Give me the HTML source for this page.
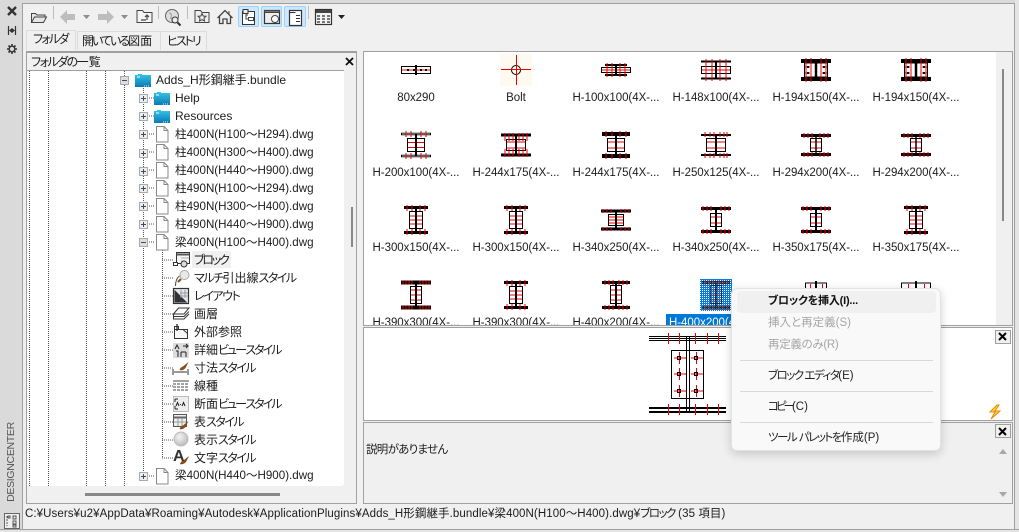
<!DOCTYPE html>
<html><head><meta charset="utf-8"><style>
html,body{margin:0;padding:0}
body{width:1019px;height:532px;overflow:hidden;background:#f0f0f0;position:relative;font-family:"Liberation Sans","Noto Sans CJK JP",sans-serif;font-size:12px;color:#1c1c1c;font-feature-settings:"palt"}
.a{position:absolute}
.t{position:absolute;white-space:nowrap;line-height:16px;height:16px}
.f{font-size:11.6px}
.k{letter-spacing:-1.5px}
.kk{letter-spacing:-2px}
.l{position:absolute;width:100px;text-align:center;line-height:16px;white-space:nowrap;font-size:11.5px;letter-spacing:-.04px}
svg{position:absolute;overflow:visible}
.m{position:absolute;left:36px;white-space:nowrap;line-height:16px;font-size:11.5px;color:#222}
.d{color:#a6a6a6}
.s{position:absolute;left:8px;width:193px;height:1px;background:#d9d9d9}
.x{position:absolute;width:16px;height:14px;background:#f0f0f0;border:1px solid #a0a0a0;box-sizing:border-box}
</style></head><body>
<!-- frame -->
<div class="a" style="left:0;top:0;width:1019px;height:3px;background:#dadada"></div>
<div class="a" style="left:0;top:0;width:22px;height:532px;background:#dadada"></div>
<div class="a" style="left:22px;top:3px;width:1px;height:527px;background:#a0a0a0"></div>
<div class="a" style="left:1014px;top:3px;width:1px;height:527px;background:#a0a0a0"></div>
<div class="a" style="left:1015px;top:0;width:4px;height:532px;background:#e4e4e4"></div>
<div class="a" style="left:0;top:529px;width:1019px;height:1px;background:#a0a0a0"></div>
<div class="a" style="left:0;top:530px;width:1019px;height:2px;background:#e4e4e4"></div>
<div class="a" style="left:22px;top:3px;width:993px;height:1px;background:#a0a0a0"></div>
<!-- left strip icons -->
<svg style="left:0;top:0" width="22" height="532">
<path d="M8 7l8 8M16 7l-8 8" stroke="#333" stroke-width="2.4" fill="none"/>
<path d="M8.500 26v9M15.500 26v9" stroke="#333" stroke-width="1.200"/><path d="M9 30.500l3-2.500v5zM15 30.500l-3-2.500v5z" fill="#333"/>
<path d="M12 44v10M7 49h10M8.500 45.500l7 7M15.500 45.500l-7 7" stroke="#333" stroke-width="1.600"/>
<circle cx="12" cy="49" r="2.800" fill="#dadada" stroke="#333" stroke-width="1.400"/>
<rect x="4.500" y="513.500" width="15" height="15" fill="#eee" stroke="#666"/>
<path d="M8 516h2v2h-2zM13 516h3v3h-3zM13 521h3v3h-3zM13 525h3v2h-3z" fill="none" stroke="#555"/>
<path d="M7 516v10" stroke="#555" stroke-dasharray="2 1"/>
</svg>
<div class="t" style="left:-29px;top:454px;width:80px;text-align:center;transform:rotate(-90deg);color:#555;font-size:10.500px;letter-spacing:-.3px">DESIGNCENTER</div>

<!-- toolbar selected -->
<div class="a" style="left:238px;top:6px;width:21px;height:21px;background:#cce8ff;border:1px solid #99d1ff;box-sizing:border-box;border-radius:2px"></div>
<div class="a" style="left:261px;top:6px;width:21px;height:21px;background:#cce8ff;border:1px solid #99d1ff;box-sizing:border-box;border-radius:2px"></div>
<div class="a" style="left:284px;top:6px;width:22px;height:21px;background:#cce8ff;border:1px solid #99d1ff;box-sizing:border-box;border-radius:2px"></div>
<svg style="left:0;top:0" width="360" height="30">
<g fill="none" stroke="#444" stroke-width="1">
<path d="M31.500 22.500v-9h4l1.500 1.500h8v2M31.500 22.500l3-5.500h12l-3 5.500z" fill="#e6e6e6"/>
<path d="M137 22.500h15v-10h-8l-1.500-2h-5.500z" fill="#f4f4f4"/>
<path d="M141 20h5M147 20v-4M145 17l2-2 2 2" stroke-width="1.200"/>
<path d="M195 22.500h14v-10h-7l-1.500-2h-5.500z" fill="#eee"/>
<path d="M202 13.500l1.200 2.500 2.800.3-2 1.900.5 2.800-2.500-1.300-2.500 1.300.5-2.800-2-1.900 2.800-.3z"/>
<path d="M217.500 18l7.500-7.500 7.500 7.500M219.500 16.500v7h3.500v-4.500h4v4.500h3.500v-7" stroke-width="1.300" fill="#eee"/>
<path d="M229 11v3" />
<circle cx="172" cy="16" r="6.500" fill="#ddd" stroke="#666"/>
<path d="M169 13c2 0 3 2 2 4s2 3 3 2" stroke="#999"/>
<circle cx="175" cy="20" r="3" fill="#eee" stroke="#333"/>
<path d="M177.500 22.500l3 3" stroke="#333" stroke-width="2"/>
<rect x="242.500" y="11.500" width="12" height="13" fill="#fff" stroke="#333"/>
<rect x="243" y="9.500" width="5" height="4" fill="#eee" stroke="#333"/>
<path d="M246 13v6h2M246 15h2"/><rect x="248.500" y="17.500" width="5" height="3"/>
<rect x="264.500" y="10.500" width="15" height="13" fill="#eee" stroke="#333" stroke-width="1.200"/>
<rect x="264.500" y="10.500" width="15" height="2" fill="#777"/>
<circle cx="275" cy="19" r="3.500" fill="#fff"/>
<rect x="289.500" y="10.500" width="12" height="15" fill="#fff" stroke="#333" stroke-width="1.200"/>
<path d="M289.500 12.500h6M296 15.500h4M296 18.500h4M296 21.500h4" stroke="#333"/>
<rect x="315.500" y="9.500" width="16" height="15" fill="#f4f4f4" stroke="#333" stroke-width="1.200"/>
</g>
<path d="M316 10h15v3h-15z" fill="#444"/>
<path d="M317 15h3v2h-3zM322 15h3v2h-3zM327 15h3v2h-3zM317 18h3v2h-3zM322 18h3v2h-3zM327 18h3v2h-3zM317 21h3v2h-3zM322 21h3v2h-3zM327 21h3v2h-3z" fill="#777"/>
<path d="M60 17l7-7v4h8v6h-8v4z" fill="#bdbdbd"/>
<path d="M114 17l-7-7v4h-9v6h9v4z" fill="#bdbdbd"/>
<path d="M83 15h7l-3.500 4zM121 15h7l-3.500 4z" fill="#8c8c8c"/>
<path d="M338 15h7l-3.500 4z" fill="#222"/>
<path d="M53.500 6v13M158.500 6v13M187.500 6v13M308.500 6v13" stroke="#bdbdbd"/>
</svg>
<!-- tabs -->
<div class="a" style="left:26px;top:30px;width:50px;height:20px;background:#f0f0f0;border:1px solid #dcdcdc;border-bottom:0;box-sizing:border-box"></div>
<div class="a" style="left:77px;top:31px;width:84px;height:19px;border:1px solid #dcdcdc;border-bottom:0;box-sizing:border-box"></div>
<div class="a" style="left:161px;top:31px;width:46px;height:19px;border:1px solid #dcdcdc;border-bottom:0;border-left:0;box-sizing:border-box"></div>
<div class="t" style="left:33px;top:31px;letter-spacing:-1.750px">フォルダ</div>
<div class="t" style="left:82px;top:33px"><span class="kk">開いている</span>図面</div>
<div class="t" style="left:167px;top:33px;letter-spacing:-2px">ヒストリ</div>

<!-- tree panel -->
<div class="a" style="left:26px;top:51px;width:331px;height:453px;border:1px solid #a0a0a0;border-top-width:2px;box-sizing:border-box"></div>
<div class="a" style="left:27px;top:70px;width:317px;height:1px;background:#a0a0a0"></div>
<div class="a" style="left:27px;top:71px;width:317px;height:415px;background:#fff;border-radius:0 0 3px 0"></div>
<div class="t" style="left:31px;top:54px"><span style="letter-spacing:-1.500px">フォルダの</span>一覧</div>
<svg style="left:0;top:0" width="360" height="532">
<path d="M346 58l7 7M353 58l-7 7" stroke="#111" stroke-width="1.800" fill="none"/>
<g stroke="#555" fill="none" stroke-dasharray="1 1">
<path d="M29.500 71v415M48.500 71v415M86.500 71v415M105.500 71v415M124.500 71v415"/>
<path d="M143.500 88v387M162.500 250v208"/>
<path d="M147 98h7M147 116h7M147 134h8M147 152h8M147 170h8M147 188h8M147 206h8M147 224h8M147 242h8M147 476h8"/>
<path d="M162 260h11M162 278h11M162 296h11M162 314h11M162 332h11M162 350h11M162 368h11M162 386h11M162 404h11M162 422h11M162 440h11M162 458h11"/>
</g>
<rect x="344" y="71" width="12" height="415" fill="#f0f0f0"/>
<rect x="351" y="207" width="2" height="40" fill="#888"/>
<rect x="85" y="493" width="195" height="3" fill="#888"/>
</svg>
<div class="a" style="left:192px;top:251px;width:39px;height:17px;background:#f0f0f0"></div>
<svg style="left:0;top:0" width="360" height="532">
<defs>
<linearGradient id="fg" x1="0" y1="0" x2="0" y2="1"><stop offset="0" stop-color="#35c6e8"/><stop offset="1" stop-color="#0b79b4"/></linearGradient>
<radialGradient id="sph" cx=".4" cy=".35" r=".7"><stop offset="0" stop-color="#f4f4f4"/><stop offset="1" stop-color="#b8b8b8"/></radialGradient>
<symbol id="fold" overflow="visible"><path d="M0 0h3v-1h4v1h9v12h-16z" fill="url(#fg)"/><path d="M2 2h3" stroke="#fff"/><path d="M9 11h6" stroke="#cfe" stroke-dasharray="1 1"/></symbol>
<symbol id="file" overflow="visible"><path d="M.5 .5h7.500l4 4v11.500h-11.500z" fill="#fff" stroke="#888"/><path d="M8 .5v4h4" fill="none" stroke="#888"/></symbol>
<symbol id="pl" overflow="visible"><rect x=".5" y=".5" width="8" height="8" fill="#eee" stroke="#aaa"/><path d="M2 4.500h5M4.500 2v5" stroke="#3a4a70"/></symbol>
<symbol id="mi" overflow="visible"><rect x=".5" y=".5" width="8" height="8" fill="#ddd" stroke="#aaa"/><path d="M2 4.500h5" stroke="#3a4a70"/></symbol>
<symbol id="brush" overflow="visible"><path d="M0 8c1-3 3-3 4-4l5-4-3 6c-1 1-3 3-6 2z" fill="#8b4a1c"/></symbol>
</defs>
<use href="#mi" x="120" y="76"/><use href="#fold" x="135" y="75"/>
<use href="#pl" x="139" y="94"/><use href="#fold" x="154" y="93"/>
<use href="#pl" x="139" y="112"/><use href="#fold" x="154" y="111"/>
<use href="#pl" x="139" y="130"/><use href="#file" x="156" y="126"/>
<use href="#pl" x="139" y="149"/><use href="#file" x="156" y="144"/>
<use href="#pl" x="139" y="167"/><use href="#file" x="156" y="162"/>
<use href="#pl" x="139" y="184"/><use href="#file" x="156" y="180"/>
<use href="#pl" x="139" y="202"/><use href="#file" x="156" y="198"/>
<use href="#pl" x="139" y="220"/><use href="#file" x="156" y="216"/>
<use href="#mi" x="139" y="238"/><use href="#file" x="156" y="234"/>
<use href="#pl" x="139" y="472"/><use href="#file" x="156" y="468"/>
<g fill="none" stroke="#333" stroke-width="1">
<rect x="176.500" y="252.500" width="13" height="11" fill="#f4f4f4"/><path d="M176.500 254.500h13" stroke-width="2" stroke="#555"/><path d="M181 258h8M181 261h4" stroke="#aaa"/><circle cx="184" cy="264" r="3" fill="#ddd"/><rect x="173.500" y="262.500" width="4" height="3" fill="#fff"/>
<path d="M175.500 286c0-5 1-8 4-10" stroke="#444"/><circle cx="184.500" cy="275" r="4.500" fill="#e8e8e8" stroke="#aaa"/><path d="M181 279l-3 3" stroke="#8b4a1c" stroke-width="2.200"/>
<rect x="173.500" y="288.500" width="15" height="15" fill="#e4e8f0" stroke="#333" stroke-width="1.200"/><path d="M175 302v-11l11 11z" fill="#333"/><path d="M181 290v8M185 290v8M180 293h8M180 296h8" stroke="#999"/>
<path d="M173.500 314l5-6h10.500l-5 6zM173.500 314v2.500h10.500l5-5M173.500 316.500v2.500h10.500l5-5" stroke="#333"/>
<path d="M174.500 329.500h13v9h-13zM174.500 329.500v-3h4v3M183 329.500l4.500 4" stroke="#333" fill="#f8f8f8"/><path d="M177 324v7" stroke="#333" stroke-width="1.400"/>
<rect x="173" y="343" width="16" height="15" fill="#dcdcdc" stroke="none"/><path d="M175 349l2-4 2 4M176 351h2v6M181 352h5M181 352v5M186 352v5M183 346h5M186 344l2 2-2 2" stroke="#222"/>
<path d="M173 369v6M188 369v6M174 372h13" stroke="#333"/>
<path d="M173 381h16" stroke="#444"/><path d="M173 384h16M173 387h16M173 390h16" stroke="#444" stroke-dasharray="3 1"/>
<rect x="173.500" y="396.500" width="15" height="15" fill="#eee" stroke="#bbb"/><path d="M175 399h3M175 399v3M175 409h3M175 406v3" stroke="#222"/><path d="M176 406l1.500-3.500 1.500 3.500M182 406l1.500-3.500 1.500 3.500M180 404.500h1" stroke="#222"/>
<rect x="173.500" y="414.500" width="13" height="12" fill="#f0f0f0" stroke="#555"/><path d="M173.500 417.500h13" stroke="#666" stroke-width="2"/><path d="M178 418v8M182 418v8M174 422h12" stroke="#999"/>
<circle cx="181" cy="439" r="7" fill="url(#sph)" stroke="#bbb"/>
</g>
<use href="#brush" x="179.500" y="362"/><use href="#brush" x="179.500" y="421"/><use href="#brush" x="180" y="456"/>
</svg>
<div class="t" style="left:173px;top:449px;font-size:16px;font-weight:bold;color:#333">A</div>
<div class="t" style="left:156px;top:72px">Adds_H形鋼継手.bundle</div>
<div class="t" style="left:175px;top:90px">Help</div>
<div class="t" style="left:175px;top:108px">Resources</div>
<div class="t f" style="left:175px;top:127px">柱400N(H100～H294).dwg</div>
<div class="t f" style="left:175px;top:145px">柱400N(H300～H400).dwg</div>
<div class="t f" style="left:175px;top:163px">柱400N(H440～H900).dwg</div>
<div class="t f" style="left:175px;top:181px">柱490N(H100～H294).dwg</div>
<div class="t f" style="left:175px;top:199px">柱490N(H300～H400).dwg</div>
<div class="t f" style="left:175px;top:217px">柱490N(H440～H900).dwg</div>
<div class="t f" style="left:175px;top:235px">梁400N(H100～H400).dwg</div>
<div class="t" style="left:194px;top:252px;letter-spacing:-2.200px">ブロック</div>
<div class="t" style="left:194px;top:270px"><span class="k">マルチ</span>引出線<span class="k">スタイル</span></div>
<div class="t" style="left:194px;top:288px;letter-spacing:-1.400px">レイアウト</div>
<div class="t" style="left:194px;top:306px">画層</div>
<div class="t" style="left:194px;top:324px">外部参照</div>
<div class="t" style="left:194px;top:342px">詳細<span class="kk" style="word-spacing:-1px">ビュー スタイル</span></div>
<div class="t" style="left:194px;top:360px">寸法<span class="k">スタイル</span></div>
<div class="t" style="left:194px;top:378px">線種</div>
<div class="t" style="left:194px;top:396px">断面<span class="kk" style="word-spacing:-1px">ビュー スタイル</span></div>
<div class="t" style="left:194px;top:414px">表<span class="k">スタイル</span></div>
<div class="t" style="left:194px;top:432px">表示<span class="k">スタイル</span></div>
<div class="t" style="left:194px;top:450px">文字<span class="k">スタイル</span></div>
<div class="t f" style="left:175px;top:468px">梁400N(H440～H900).dwg</div>

<!-- status -->
<div class="t" style="left:25px;top:506px;font-size:11.500px;letter-spacing:.09px">C:¥Users¥u2¥AppData¥Roaming¥Autodesk¥ApplicationPlugins¥Adds_H形鋼継手.bundle¥梁400N(H100～H400).dwg¥<span class="k">ブロック</span> (35 項目)</div>

<!-- thumbs panel -->
<div class="a" style="left:363px;top:51px;width:650px;height:275px;border:1px solid #a0a0a0;box-sizing:border-box;background:#fff;overflow:hidden" id="tp">
<div class="a" style="left:632px;top:0;width:17px;height:273px;background:#f0f0f0"></div>
<div class="a" style="left:638px;top:17px;width:2px;height:152px;background:#888"></div>
<svg style="left:-364px;top:-52px" width="1019" height="340">
<defs>
<pattern id="chk" width="2" height="2" patternUnits="userSpaceOnUse"><rect width="2" height="2" fill="#0078d7"/><rect width="1" height="1" fill="#fff"/><rect x="1" y="1" width="1" height="1" fill="#0a84e0"/></pattern>
<symbol id="tA" overflow="visible"><rect x="-14.500" y="-3.500" width="29" height="7" fill="none" stroke="#000"/><path d="M0-5V5" stroke="#000" stroke-width="2"/><path d="M-14 0h28" stroke="#e00"/><path d="M-9-1h2v2h-2zM-3-1h2v2h-2zM4-1h2v2h-2zM9-1h2v2h-2z"/></symbol>
<symbol id="tB" overflow="visible"><path d="M-11-5h22M-11 5h22" stroke="#000" stroke-width="2"/><rect x="-14.500" y="-2.500" width="29" height="5" fill="none" stroke="#000"/><path d="M-9-7V7M-4-7V7M4-7V7M9-7V7M-14 0h28" stroke="#e00"/><path d="M0-5V5" stroke="#000" stroke-width="2"/></symbol>
<symbol id="tC" overflow="visible"><path d="M-15-8.500h30M-15 8.500h30" stroke="#000" stroke-width="2"/><rect x="-14.500" y="-3.500" width="29" height="7" fill="none" stroke="#000"/><path d="M-10-11V11M-4-11V11M4-11V11M10-11V11M-14 0h28" stroke="#e00"/><path d="M0-9V9" stroke="#000" stroke-width="2"/></symbol>
<symbol id="tD" overflow="visible"><path d="M-15-9h30M-15 9h30" stroke="#000" stroke-width="4"/><rect x="-11.500" y="-7" width="23" height="14" fill="none" stroke="#000"/><path d="M-10-12V12M-5-12V12M5-12V12M10-12V12M-11-3h5M-11 3h5M6-3h5M6 3h5" stroke="#e00"/><path d="M0-9V9" stroke="#000" stroke-width="2.500"/><path d="M-9-4h2v2h-2zM-9 2h2v2h-2zM7-4h2v2h-2zM7 2h2v2h-2z"/></symbol>
<symbol id="tE" overflow="visible"><path d="M-15-11h30M-15 11h30" stroke="#000" stroke-width="2.500"/><path d="M-14-11h28M-14 11h28" stroke="#fff" stroke-width=".7"/><rect x="-8.500" y="-6.500" width="17" height="13" fill="none" stroke="#000"/><path d="M-10-14V-8M-5-14V-8M5-14V-8M10-14V-8M-10 14V8M-5 14V8M5 14V8M10 14V8M-8-2.500h16M-8 2.500h16" stroke="#e00"/><path d="M0-11V11" stroke="#000" stroke-width="2"/></symbol>
<symbol id="tF" overflow="visible"><path d="M-15-10h30M-15 10h30" stroke="#000" stroke-width="3"/><rect x="-9.500" y="-5.500" width="19" height="11" fill="none" stroke="#000"/><path d="M-11-12V-4M-7-12V-4M-3-12V-4M3-12V-4M7-12V-4M11-12V-4M-11 12V4M-7 12V4M-3 12V4M3 12V4M7 12V4M11 12V4M-9-3h18M-9 3h18" stroke="#e00"/><path d="M0-10V10" stroke="#000" stroke-width="2"/></symbol>
<symbol id="tG" overflow="visible"><path d="M-14-11h28M-14 11h28" stroke="#000" stroke-width="4"/><rect x="-8.500" y="-6.500" width="17" height="13" fill="none" stroke="#000"/><path d="M-10-14V-8M-4-14V-9M4-14V-8M10-14V-8M-10 14V8M4 14V8M10 14V8M-4 14V9M-8-3h16M-8 3h16" stroke="#e00"/><path d="M0-11V11" stroke="#000" stroke-width="2"/></symbol>
<symbol id="tH" overflow="visible"><path d="M-15-10h30M-15 10h30" stroke="#000" stroke-width="2"/><rect x="-9.500" y="-6.500" width="19" height="13" fill="none" stroke="#000"/><path d="M-11-13V-8M-6-13V-8M-2-13V-8M4-13V-8M8-13V-8M11-13V-8M-11 13V8M-6 13V8M-2 13V8M4 13V8M8 13V8M11 13V8M-9-3h18M-9 3h18" stroke="#e00"/><path d="M0-10V10" stroke="#000" stroke-width="2"/></symbol>
<symbol id="tI" overflow="visible"><path d="M-15-9.500h30M-15 9.500h30" stroke="#000" stroke-width="3"/><rect x="-5.500" y="-6.500" width="11" height="13" fill="none" stroke="#000"/><path d="M-12-12V-7M-8-12V-7M-4-12V-7M4-12V-7M8-12V-7M12-12V-7M-12 12V7M-8 12V7M-4 12V7M4 12V7M8 12V7M12 12V7M-5-3h10M-5 3h10" stroke="#e00"/><path d="M0-10V10" stroke="#000" stroke-width="1.500"/></symbol>
<symbol id="tJ" overflow="visible"><path d="M-12-12.500h24M-12 12.500h24" stroke="#000" stroke-width="3"/><rect x="-6.500" y="-8.500" width="13" height="17" fill="none" stroke="#000"/><path d="M-9-15V-9M-4-15V-9M4-15V-9M9-15V-9M-9 15V9M-4 15V9M4 15V9M9 15V9M-6-4h12M-6 0h12M-6 4h12" stroke="#e00"/><path d="M0-12V12" stroke="#000" stroke-width="2"/></symbol>
<symbol id="tK" overflow="visible"><path d="M-15-9h30M-15 9h30" stroke="#000" stroke-width="3"/><rect x="-7.500" y="-5.500" width="15" height="11" fill="none" stroke="#000"/><path d="M-13-11V-7M-9-11V-7M-5-11V-7M5-11V-7M9-11V-7M13-11V-7M-13 11V7M-9 11V7M-5 11V7M5 11V7M9 11V7M13 11V7M-7-3h14M-7 0h14M-7 3h14" stroke="#e00"/><path d="M0-9V9" stroke="#000" stroke-width="2"/></symbol>
<symbol id="tL" overflow="visible"><path d="M-15-11.500h30M-15 11.500h30" stroke="#000" stroke-width="3"/><rect x="-5.500" y="-6.500" width="11" height="13" fill="none" stroke="#000"/><path d="M-13-14V-9M-9-14V-9M-5-14V-9M5-14V-9M9-14V-9M13-14V-9M-13 14V9M-9 14V9M-5 14V9M5 14V9M9 14V9M13 14V9M-5-3h10M-5 3h10" stroke="#e00"/><path d="M0-11V11" stroke="#000" stroke-width="2"/></symbol>
<symbol id="tN" overflow="visible"><path d="M-15-12.500h30M-15 12.500h30" stroke="#000" stroke-width="4"/><rect x="-5.500" y="-8.500" width="11" height="17" fill="none" stroke="#000"/><path d="M-13-14.500V-10.500M-10-14.500V-10.500M-7-14.500V-10.500M-4-14.500V-10.500M4-14.500V-10.500M7-14.500V-10.500M10-14.500V-10.500M13-14.500V-10.500M-13 14.500V10.500M-10 14.500V10.500M-7 14.500V10.500M-4 14.500V10.500M4 14.500V10.500M7 14.500V10.500M10 14.500V10.500M13 14.500V10.500M-5-5h10M-5 0h10M-5 5h10" stroke="#e00"/><path d="M0-12V12" stroke="#000" stroke-width="2"/></symbol>
<symbol id="tO" overflow="visible"><path d="M-14-12.500h28M-14 12.500h28" stroke="#000" stroke-width="3"/><rect x="-5.500" y="-9.500" width="11" height="18" fill="none" stroke="#000"/><path d="M-11-15V-10M-7-15V-10M-3-15V-10M3-15V-10M7-15V-10M11-15V-10M-11 15V10M-7 15V10M-3 15V10M3 15V10M7 15V10M11 15V10M-5-5h10M-5 0h10M-5 5h10" stroke="#e00"/><path d="M0-12V12" stroke="#000" stroke-width="2"/></symbol>
</defs>
<use href="#tA" x="416" y="70"/>
<rect x="500" y="54" width="32" height="32" fill="#fffaf0"/>
<circle cx="516" cy="70" r="4.500" fill="none" stroke="#000"/><path d="M501 69.500h30M516.500 55v30" stroke="#e00"/>
<use href="#tB" x="616" y="70"/><use href="#tC" x="716" y="70"/><use href="#tD" x="816" y="70"/><use href="#tD" x="916" y="70"/>
<use href="#tE" x="416" y="145"/><use href="#tF" x="516" y="145"/><use href="#tG" x="616" y="145"/><use href="#tH" x="716" y="145"/><use href="#tI" x="816" y="145"/><use href="#tI" x="916" y="145"/>
<use href="#tJ" x="416" y="220"/><use href="#tJ" x="516" y="220"/><use href="#tK" x="616" y="220"/><use href="#tL" x="716" y="220"/><use href="#tL" x="816" y="220"/><use href="#tJ" x="916" y="220"/>
<use href="#tN" x="416" y="295"/><use href="#tJ" x="516" y="295"/><use href="#tO" x="616" y="295"/>
<rect x="700" y="279" width="32" height="32" fill="url(#chk)"/><use href="#tO" x="716" y="295"/><rect x="700" y="279" width="32" height="32" fill="url(#chk)" opacity=".4"/>
<path d="M805.500 292v-9h21v9M901.500 292v-9h29v9" fill="none" stroke="#000"/><path d="M816 281v8M916 281v8" stroke="#000" stroke-width="2"/><path d="M810.500 284v5M822.500 284v5M908.500 284v5M924.500 284v5" stroke="#e00"/>
</svg>
<div class="l" style="left:2px;top:38px">80x290</div>
<div class="l" style="left:102px;top:38px">Bolt</div>
<div class="l" style="left:202px;top:38px">H-100x100(4X-...</div>
<div class="l" style="left:302px;top:38px">H-148x100(4X-...</div>
<div class="l" style="left:402px;top:38px">H-194x150(4X-...</div>
<div class="l" style="left:502px;top:38px">H-194x150(4X-...</div>
<div class="l" style="left:2px;top:113px">H-200x100(4X-...</div>
<div class="l" style="left:102px;top:113px">H-244x175(4X-...</div>
<div class="l" style="left:202px;top:113px">H-244x175(4X-...</div>
<div class="l" style="left:302px;top:113px">H-250x125(4X-...</div>
<div class="l" style="left:402px;top:113px">H-294x200(4X-...</div>
<div class="l" style="left:502px;top:113px">H-294x200(4X-...</div>
<div class="l" style="left:2px;top:188px">H-300x150(4X-...</div>
<div class="l" style="left:102px;top:188px">H-300x150(4X-...</div>
<div class="l" style="left:202px;top:188px">H-340x250(4X-...</div>
<div class="l" style="left:302px;top:188px">H-340x250(4X-...</div>
<div class="l" style="left:402px;top:188px">H-350x175(4X-...</div>
<div class="l" style="left:502px;top:188px">H-350x175(4X-...</div>
<div class="l" style="left:2px;top:263px">H-390x300(4X-...</div>
<div class="l" style="left:102px;top:263px">H-390x300(4X-...</div>
<div class="l" style="left:202px;top:263px">H-400x200(4X-...</div>
<div class="a" style="left:302px;top:262px;width:100px;height:14px;background:#0078d7"></div>
<div class="l" style="left:305px;top:263px;color:#fff;text-align:left">H-400x200(4X-...</div>
</div>

<!-- preview -->
<div class="a" style="left:363px;top:327px;width:650px;height:94px;border:1px solid #a0a0a0;box-sizing:border-box;background:#fff"></div>
<svg style="left:0;top:0" width="1019" height="532">
<path d="M649 336.500h77M649 338.500h77M649 340.500h77" stroke="#000" stroke-width="1"/>
<path d="M649 408h77M649 412h77" stroke="#000" stroke-width="2"/>
<path d="M686.500 337v75M689.500 337v75" stroke="#000"/>
<rect x="671.500" y="350.500" width="32" height="48" fill="none" stroke="#000"/>
<path d="M668.500 333v11M679.500 333v11M695.500 333v11M707.500 333v11M718.500 333v11M668.500 404v11M679.500 404v11M695.500 404v11M707.500 404v11M718.500 404v11M679.500 352v12M696.500 352v12M679.500 368v12M696.500 368v12M679.500 385v12M696.500 385v12M674 358h12M691 358h12M674 374h12M691 374h12M674 391h12M691 391h12" stroke="#e00"/>
<g fill="none" stroke="#000"><rect x="677.500" y="356.500" width="3" height="3"/><rect x="694.500" y="356.500" width="3" height="3"/><rect x="677.500" y="372.500" width="3" height="3"/><rect x="694.500" y="372.500" width="3" height="3"/><rect x="677.500" y="389.500" width="3" height="3"/><rect x="694.500" y="389.500" width="3" height="3"/></g>
<path d="M997 405l-7 7h5l-4 7 9-8h-5l4-6z" fill="#ffd24a" stroke="#e58a00" stroke-width="1"/>
</svg>
<div class="x" style="left:995px;top:330px"></div>

<!-- description -->
<div class="a" style="left:363px;top:422px;width:650px;height:82px;border:1px solid #a0a0a0;box-sizing:border-box"></div>
<div class="x" style="left:995px;top:424px"></div>
<svg style="left:0;top:0" width="1019" height="532"><path d="M999 333l7 7M1006 333l-7 7M999 428l7 7M1006 428l-7 7" stroke="#000" stroke-width="2"/><path d="M999 454l4-5 4 5zM999 492l4 5 4-5z" fill="#a8a8a8"/></svg>
<div class="t" style="left:366px;top:442px;font-size:11.500px;letter-spacing:-.7px">説明がありません</div>

<!-- context menu -->
<div class="a" style="left:731px;top:288px;width:210px;height:163px;background:#f9f9f9;border:1px solid #e3e3e3;box-sizing:border-box;border-radius:6px;box-shadow:0 3px 10px rgba(0,0,0,.18)">
<div class="a" style="left:5px;top:2px;width:199px;height:22px;background:#f0f0f0;border-radius:4px"></div>
<div class="m" style="top:4px;color:#111;font-weight:bold;font-size:11px;letter-spacing:-.2px">ブロックを挿入(I)...</div>
<div class="m d" style="top:26px">挿入と再定義(S)</div>
<div class="m d" style="top:48px;letter-spacing:-.3px">再定義のみ(R)</div>
<div class="s" style="top:71px"></div>
<div class="m" style="top:79px"><span class="k">ブロック エディタ</span>(E)</div>
<div class="s" style="top:102px"></div>
<div class="m" style="top:110px"><span style="letter-spacing:-3px">コピー</span>(C)</div>
<div class="s" style="top:133px"></div>
<div class="m" style="top:141px"><span class="k" style="word-spacing:1px">ツール パレットを</span>作成(P)</div>
</div>
</body></html>
